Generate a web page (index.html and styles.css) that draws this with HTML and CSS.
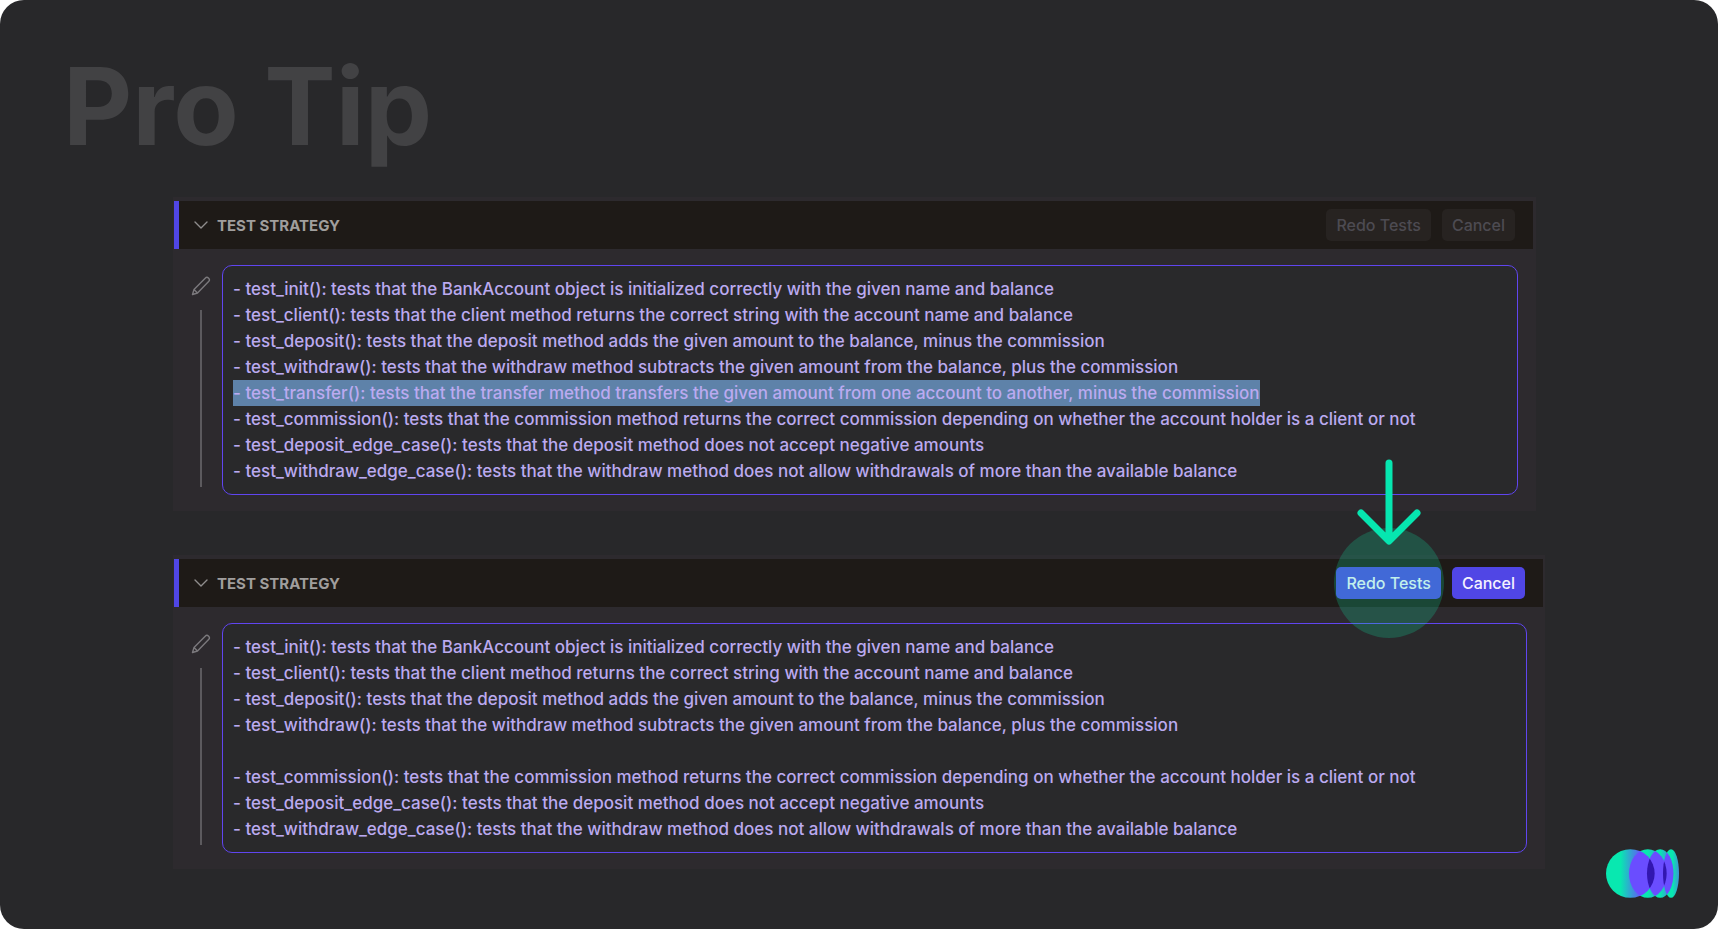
FILE: index.html
```html
<!DOCTYPE html>
<html lang="en">
<head>
<meta charset="utf-8">
<title>Pro Tip</title>
<link rel="stylesheet" href="styles.css">
</head>
<body>
<main class="slide">
  <h1 class="title">Pro Tip</h1>

  <section class="panel panel-before">
    <header class="panel-header">
      <svg class="chevron" viewBox="0 0 14 8" aria-hidden="true"><path d="M1 1l6 6 6-6"/></svg>
      <h2 class="panel-title"><label for="strategy-before">TEST STRATEGY</label></h2>
      <div class="actions">
        <button class="btn" type="button" disabled>Redo Tests</button>
        <button class="btn" type="button" disabled>Cancel</button>
      </div>
    </header>
    <div class="panel-body">
      <div class="rail">
        <svg class="pencil" viewBox="0 0 20 20" aria-hidden="true"><path d="M1.500 18.500l1.500-5L14.200 2.200a2.300 2.300 0 0 1 3.400 3.400L6.500 17zM3 13.500L6.500 17"/></svg>
        <span class="rail-line"></span>
      </div>
      <textarea class="strategy" id="strategy-before" rows="8" spellcheck="false">- test_init(): tests that the BankAccount object is initialized correctly with the given name and balance
- test_client(): tests that the client method returns the correct string with the account name and balance
- test_deposit(): tests that the deposit method adds the given amount to the balance, minus the commission
- test_withdraw(): tests that the withdraw method subtracts the given amount from the balance, plus the commission
- test_transfer(): tests that the transfer method transfers the given amount from one account to another, minus the commission
- test_commission(): tests that the commission method returns the correct commission depending on whether the account holder is a client or not
- test_deposit_edge_case(): tests that the deposit method does not accept negative amounts
- test_withdraw_edge_case(): tests that the withdraw method does not allow withdrawals of more than the available balance</textarea>
    </div>
  </section>

  <section class="panel">
    <header class="panel-header">
      <svg class="chevron" viewBox="0 0 14 8" aria-hidden="true"><path d="M1 1l6 6 6-6"/></svg>
      <h2 class="panel-title"><label for="strategy-after">TEST STRATEGY</label></h2>
      <div class="actions">
        <div class="callout">
          <button class="btn btn-primary" type="button">Redo Tests</button>
          <span class="halo"></span>
          <svg class="arrow" viewBox="0 0 64 88" aria-hidden="true"><path d="M32 4v77M4 54l28 28 28-28"/></svg>
        </div>
        <button class="btn btn-primary" type="button">Cancel</button>
      </div>
    </header>
    <div class="panel-body">
      <div class="rail">
        <svg class="pencil" viewBox="0 0 20 20" aria-hidden="true"><path d="M1.500 18.500l1.500-5L14.200 2.200a2.300 2.300 0 0 1 3.400 3.400L6.500 17zM3 13.500L6.500 17"/></svg>
        <span class="rail-line"></span>
      </div>
      <textarea class="strategy" id="strategy-after" rows="8" spellcheck="false">- test_init(): tests that the BankAccount object is initialized correctly with the given name and balance
- test_client(): tests that the client method returns the correct string with the account name and balance
- test_deposit(): tests that the deposit method adds the given amount to the balance, minus the commission
- test_withdraw(): tests that the withdraw method subtracts the given amount from the balance, plus the commission

- test_commission(): tests that the commission method returns the correct commission depending on whether the account holder is a client or not
- test_deposit_edge_case(): tests that the deposit method does not accept negative amounts
- test_withdraw_edge_case(): tests that the withdraw method does not allow withdrawals of more than the available balance</textarea>
    </div>
  </section>

  <svg class="logo" viewBox="138 87 219 147" role="img" aria-label="Logo">
    <defs>
      <linearGradient id="fade"><stop offset=".3" stop-color="#08e8b0"/><stop offset=".75" stop-color="#6a4dff"/></linearGradient>
      <linearGradient id="fade-late"><stop offset=".5" stop-color="#08e8b0"/><stop offset="1" stop-color="#5a6af0"/></linearGradient>
      <linearGradient id="edge"><stop offset=".6" stop-color="#08e8b0"/><stop offset="1" stop-color="#3f93d8"/></linearGradient>
      <clipPath id="c1"><circle cx="211" cy="160.500" r="73"/></clipPath>
      <clipPath id="c2"><ellipse cx="263.500" cy="160.500" rx="56.500" ry="73"/></clipPath>
      <clipPath id="c3"><ellipse cx="300.500" cy="160.500" rx="39.500" ry="73"/></clipPath>
    </defs>
    <ellipse cx="333" cy="160.500" rx="24" ry="73" fill="url(#edge)"/>
    <ellipse cx="300.500" cy="160.500" rx="39.500" ry="73" fill="url(#fade-late)"/>
    <ellipse cx="263.500" cy="160.500" rx="56.500" ry="73" fill="url(#fade-late)"/>
    <circle cx="211" cy="160.500" r="73" fill="url(#fade)"/>
    <g fill="#6a4dff">
      <ellipse cx="263.500" cy="160.500" rx="56.500" ry="73" clip-path="url(#c1)"/>
      <ellipse cx="300.500" cy="160.500" rx="39.500" ry="73" clip-path="url(#c2)"/>
      <ellipse cx="333" cy="160.500" rx="24" ry="73" clip-path="url(#c3)"/>
    </g>
    <g fill="#3216b0">
      <g clip-path="url(#c1)"><ellipse cx="300.500" cy="160.500" rx="39.500" ry="73"/></g>
      <g clip-path="url(#c2)"><ellipse cx="333" cy="160.500" rx="24" ry="73"/></g>
    </g>
  </svg>
</main>
<script src="script.js"></script>
</body>
</html>
```
FILE: styles.css
```css
* {
  box-sizing: border-box;
}

body {
  margin: 0;
  background: #fff;
  font-family: Inter, "Liberation Sans", sans-serif;
}

.slide {
  position: relative;
  min-height: 100vh;
  padding: 31px 173px 57px;
  border-radius: 24px;
  background: #28282a;
}

.title {
  margin: 0 0 16px -110px;
  color: #424244;
  font: 700 107px/150px Inter, "Liberation Sans", sans-serif;
}

.panel {
  padding: 4px 2px 0 1px;
  background: #2d2a2e;
}

.panel-before {
  margin: 0 9px 44px 0;
}

.panel-header {
  display: flex;
  align-items: center;
  height: 48px;
  padding: 0 18px 0 15px;
  border-left: 5px solid #5046e5;
  background: #1e1a17;
}

.panel-before .panel-header {
  margin-right: 1px;
}

.chevron {
  width: 14px;
  height: 8px;
  margin-right: 9px;
}

.chevron path,
.pencil path {
  fill: none;
  stroke: #8f8d8d;
  stroke-width: 1.4;
  stroke-linecap: round;
  stroke-linejoin: round;
}

.pencil path {
  stroke: #7b797d;
}

.panel-title {
  flex: 1;
  margin: 0;
  color: #a09e9d;
  font-size: 15px;
  font-weight: 700;
}

.actions {
  display: flex;
  gap: 11px;
}

.btn {
  height: 32px;
  padding: 0 10px;
  border: 0;
  border-radius: 5px;
  background: #272321;
  color: #4d4b52;
  font: 500 16px/32px Inter, "Liberation Sans", sans-serif;
}

.btn-primary {
  background: #5046e5;
  color: #f4f2ff;
}

.callout {
  position: relative;
}

.halo {
  position: absolute;
  top: 50%;
  left: 50%;
  width: 110px;
  height: 110px;
  margin: -55px;
  border-radius: 50%;
  background: rgba(15, 230, 170, .22);
  pointer-events: none;
}

.arrow {
  position: absolute;
  bottom: 20px;
  left: 50%;
  width: 64px;
  height: 88px;
  margin: 0 0 32px -32px;
  pointer-events: none;
}

.arrow path {
  fill: none;
  stroke: #06e6b0;
  stroke-width: 7;
  stroke-linecap: round;
  stroke-linejoin: round;
}

.panel-body {
  display: flex;
  padding: 16px 16px 16px 17px;
}

.rail {
  display: flex;
  flex-direction: column;
  align-items: center;
  width: 20px;
  margin-right: 11px;
  padding: 11px 0 8px;
}

.pencil {
  width: 20px;
  height: 20px;
}

.rail-line {
  flex: 1;
  width: 2px;
  margin-top: 14px;
  background: #5c5a5e;
}

.strategy {
  flex: 1;
  display: block;
  padding: 10px;
  border: 1px solid #6045f0;
  border-radius: 10px;
  outline: 0;
  background: #29292b;
  color: #bbaaf0;
  font: 500 17px/26px Inter, "Liberation Sans", sans-serif;
  resize: none;
  overflow: hidden;
}

.strategy::selection {
  background: #5e82a9;
  color: #bbaaf0;
}

.logo {
  position: absolute;
  right: 39px;
  bottom: 31px;
  width: 73px;
  height: 49px;
}
```
FILE: script.js
```js
const field = document.getElementById("strategy-before");
const start = field.value.indexOf("- test_transfer()");
field.focus();
field.setSelectionRange(start, field.value.indexOf("\n", start));
```
